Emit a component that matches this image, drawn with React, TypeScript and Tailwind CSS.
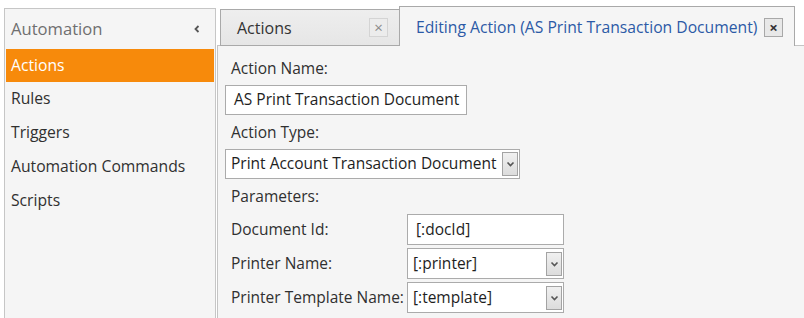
import React from "react";

const font = { fontFamily: '"Open Sans", "Noto Sans", sans-serif' };

function Chevron() {
  return (
    <svg width="9" height="6" viewBox="0 0 9 6" className="block">
      <path d="M1.5 1.5 L4.5 4.5 L7.5 1.5" fill="none" stroke="#555" strokeWidth="1.6" />
    </svg>
  );
}

function DropBtn() {
  return (
    <div className="flex h-[24px] w-[16px] shrink-0 items-center justify-center border border-[#a3a3a3] bg-gradient-to-b from-[#f0f0f0] to-[#dcdcdc]">
      <Chevron />
    </div>
  );
}

function TextBox({ value, className }: { value: string; className: string }) {
  return (
    <div className={"flex items-center whitespace-nowrap border border-[#ababab] bg-white text-[15.5px] text-[#1e1e1e] " + className}>
      {value}
    </div>
  );
}

function Select({ value, className, textPad }: { value: string; className: string; textPad: string }) {
  return (
    <div className={"flex items-center justify-between whitespace-nowrap border border-[#ababab] bg-white pr-[1px] text-[15.5px] text-[#1e1e1e] " + className}>
      <span className={textPad}>{value}</span>
      <DropBtn />
    </div>
  );
}

const label = "flex items-center pl-[6px] text-[15.5px] text-[#303030] whitespace-nowrap";

export default function App() {
  const items = ["Rules", "Triggers", "Automation Commands", "Scripts"];
  return (
    <div className="flex h-[318px] w-[804px] overflow-hidden bg-white" style={font}>
      {/* Left panel */}
      <div className="ml-[4px] mt-[8px] h-[330px] w-[212px] shrink-0 border border-[#c6c6c6] bg-[#f5f5f5]">
        <div className="flex h-[40px] items-center justify-between pl-[6px] pr-[14px]">
          <span className="text-[16.6px] text-[#6f6f6f]">Automation</span>
          <svg width="8" height="8" viewBox="0 0 8 8">
            <path d="M5.5 1 L2.5 4 L5.5 7" fill="none" stroke="#555" strokeWidth="1.8" />
          </svg>
        </div>
        <div className="mx-[1px] flex h-[33px] items-center bg-[#f78a0b] pl-[5px] text-[15.7px] text-white">Actions</div>
        {items.map((t) => (
          <div key={t} className="flex h-[33.8px] items-center pl-[6px] text-[15.7px] text-[#303030]">
            {t}
          </div>
        ))}
      </div>

      {/* Right area */}
      <div className="ml-[1px] flex flex-1 flex-col">
        {/* Tabs */}
        <div className="relative z-10 flex h-[45px] items-end pl-[3px]">
          <div className="mb-[-1px] flex h-[37px] w-[180px] items-center justify-between border border-[#a9a9a9] bg-gradient-to-b from-[#eeeeee] to-[#e6e6e6] pl-[16px] pr-[11px]">
            <span className="text-[16px] text-[#333]">Actions</span>
            <div className="flex h-[19px] w-[19px] items-center justify-center border border-[#d4d4d4] bg-[#ececec] text-[15px] leading-none text-[#8a8a8a]">
              ×
            </div>
          </div>
          <div className="mb-[-1px] ml-[-1px] flex h-[40px] w-[396px] items-start justify-between border border-b-0 border-[#a9a9a9] bg-[#f5f5f5] pl-[16px] pr-[11px] pt-[9px]">
            <span className="whitespace-nowrap text-[15.7px] leading-[22px] text-[#2c5aa6]">Editing Action (AS Print Transaction Document)</span>
            <div className="mt-[2px] flex h-[19px] w-[19px] shrink-0 items-center justify-center border border-[#a8a8a8] bg-[#e8e8e8] text-[15px] font-bold leading-none text-[#333]">
              ×
            </div>
          </div>
        </div>

        {/* Body */}
        <div className="flex-1 border-l border-t border-[#c4c4c4] bg-[#f5f5f5] pl-[7px] pt-[7px]">
          <div className={"h-[32px] " + label}>Action Name:</div>
          <TextBox value="AS Print Transaction Document" className="h-[30px] w-[242px] pl-[8px]" />
          <div className={"mt-[2px] h-[32px] " + label}>Action Type:</div>
          <Select value="Print Account Transaction Document" className="h-[30px] w-[295px]" textPad="pl-[5px]" />
          <div className={"mt-[2px] h-[32px] " + label}>Parameters:</div>
          <div className="mt-[1px] grid grid-cols-[182px_157px] gap-y-[3px]">
            <div className={"h-[31px] " + label}>Document Id:</div>
            <TextBox value="[:docId]" className="h-[31px] pl-[8px]" />
            <div className={"h-[31px] " + label}>Printer Name:</div>
            <Select value="[:printer]" className="h-[31px]" textPad="pl-[5px]" />
            <div className={"h-[31px] " + label}>Printer Template Name:</div>
            <Select value="[:template]" className="h-[31px]" textPad="pl-[5px]" />
          </div>
        </div>
      </div>
    </div>
  );
}
